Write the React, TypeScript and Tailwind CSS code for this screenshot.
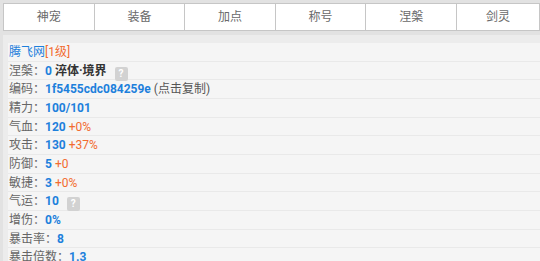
import React from "react";

const tabs = ["神宠", "装备", "加点", "称号", "涅槃", "剑灵"];

function Q() {
  return (
    <span className="inline-flex items-center justify-center w-[13px] h-[14px] ml-[8px] rounded-[2px] bg-[#d2d2d2] text-white text-[10px] leading-none font-bold align-[-2px]">
      ?
    </span>
  );
}

function Row({ children }: { children: React.ReactNode }) {
  return (
    <div className="h-[18.67px] leading-[18.6px] border-b border-[#e9e9e9] bg-[#f5f5f5] pl-[1px] whitespace-nowrap">
      {children}
    </div>
  );
}

const L = ({ t }: { t: string }) => <span className="text-[#666]">{t}：</span>;
const B = ({ t }: { t: string }) => <span className="text-[#1d80dc] font-bold">{t}</span>;
const O = ({ t }: { t: string }) => <span className="text-[#f26b2f]"> {t}</span>;

export default function App() {
  return (
    <div
      className="w-[540px] h-[261px] overflow-hidden bg-[#e2e2e2] text-[12px]"
      style={{ fontFamily: 'Roboto, "Noto Sans CJK SC", sans-serif' }}
    >
      <div className="flex ml-[3px] mt-[3px] h-[28px] bg-white border border-[#c6c6c6]">
        {tabs.map((t, i) => (
          <div
            key={t}
            className={
              i < 5
                ? "w-[90.6px] shrink-0 border-r border-[#c6c6c6] flex items-center justify-center text-[12px] text-[#6a6a6a]"
                : "flex-1 flex items-center justify-center text-[12px] text-[#6a6a6a]"
            }
          >
            {t}
          </div>
        ))}
      </div>
      <div className="ml-[3px] mt-[4px] bg-[#ececec] pl-[5px] pt-[8px] h-[300px]">
        <Row>
          <span className="text-[#1d80dc]">腾飞网</span>
          <span className="text-[#f26b2f]">[1级]</span>
        </Row>
        <Row>
          <L t="涅槃" />
          <B t="0" /> <span className="font-bold text-[#333]">淬体·境界</span>
          <Q />
        </Row>
        <Row>
          <L t="编码" />
          <B t="1f5455cdc084259e" /> <span className="text-[#555]">(点击复制)</span>
        </Row>
        <Row>
          <L t="精力" />
          <B t="100/101" />
        </Row>
        <Row>
          <L t="气血" />
          <B t="120" />
          <O t="+0%" />
        </Row>
        <Row>
          <L t="攻击" />
          <B t="130" />
          <O t="+37%" />
        </Row>
        <Row>
          <L t="防御" />
          <B t="5" />
          <O t="+0" />
        </Row>
        <Row>
          <L t="敏捷" />
          <B t="3" />
          <O t="+0%" />
        </Row>
        <Row>
          <L t="气运" />
          <B t="10" />
          <Q />
        </Row>
        <Row>
          <L t="增伤" />
          <B t="0%" />
        </Row>
        <Row>
          <L t="暴击率" />
          <B t="8" />
        </Row>
        <Row>
          <L t="暴击倍数" />
          <B t="1.3" />
        </Row>
      </div>
    </div>
  );
}
